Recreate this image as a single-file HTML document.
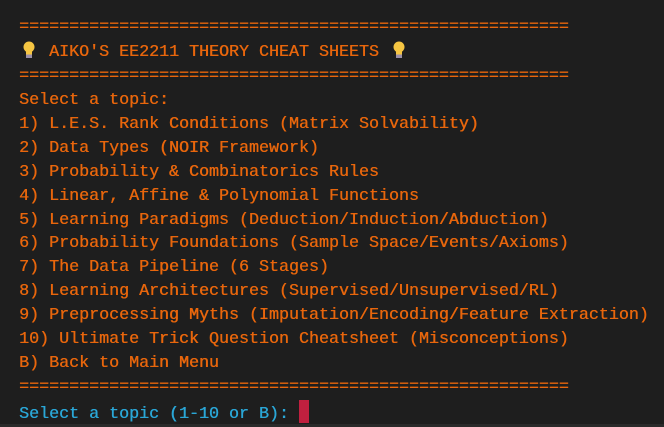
<!DOCTYPE html>
<html><head><meta charset="utf-8"><style>
html,body{margin:0;padding:0;background:#1e1e1e;width:664px;height:427px;overflow:hidden}
pre{margin:0;position:absolute;left:19px;top:16px;font-family:"Liberation Mono","DejaVu Sans Mono",monospace;font-size:16.67px;line-height:23.94px;color:#e8660c;white-space:pre;text-shadow:0.4px 0 0 currentColor}
.c{color:#2aa6d6}
.cur{display:inline-block;width:10px;height:23px;background:#c0203f;vertical-align:-5px}
.b{display:inline-block;width:20px;height:20px;vertical-align:-4px}
.bot{position:absolute;left:0;top:424px;width:664px;height:3px;background:#2a2a2a}
</style></head><body>
<pre>=======================================================
<svg class="b" viewBox="0 0 20 20"><circle cx="10" cy="7" r="5.5" fill="#f5c542"/><rect x="7" y="11" width="6" height="4" fill="#f5c542"/><rect x="7" y="14.5" width="6" height="3.5" fill="#9a8fa8"/></svg> AIKO'S EE2211 THEORY CHEAT SHEETS <svg class="b" viewBox="0 0 20 20"><circle cx="10" cy="7" r="5.5" fill="#f5c542"/><rect x="7" y="11" width="6" height="4" fill="#f5c542"/><rect x="7" y="14.5" width="6" height="3.5" fill="#9a8fa8"/></svg>
=======================================================
Select a topic:
1) L.E.S. Rank Conditions (Matrix Solvability)
2) Data Types (NOIR Framework)
3) Probability &amp; Combinatorics Rules
4) Linear, Affine &amp; Polynomial Functions
5) Learning Paradigms (Deduction/Induction/Abduction)
6) Probability Foundations (Sample Space/Events/Axioms)
7) The Data Pipeline (6 Stages)
8) Learning Architectures (Supervised/Unsupervised/RL)
9) Preprocessing Myths (Imputation/Encoding/Feature Extraction)
10) Ultimate Trick Question Cheatsheet (Misconceptions)
B) Back to Main Menu
=======================================================
<span class="c">Select a topic (1-10 or B): </span><span class="cur"></span></pre>
<div class="bot"></div>
</body></html>
